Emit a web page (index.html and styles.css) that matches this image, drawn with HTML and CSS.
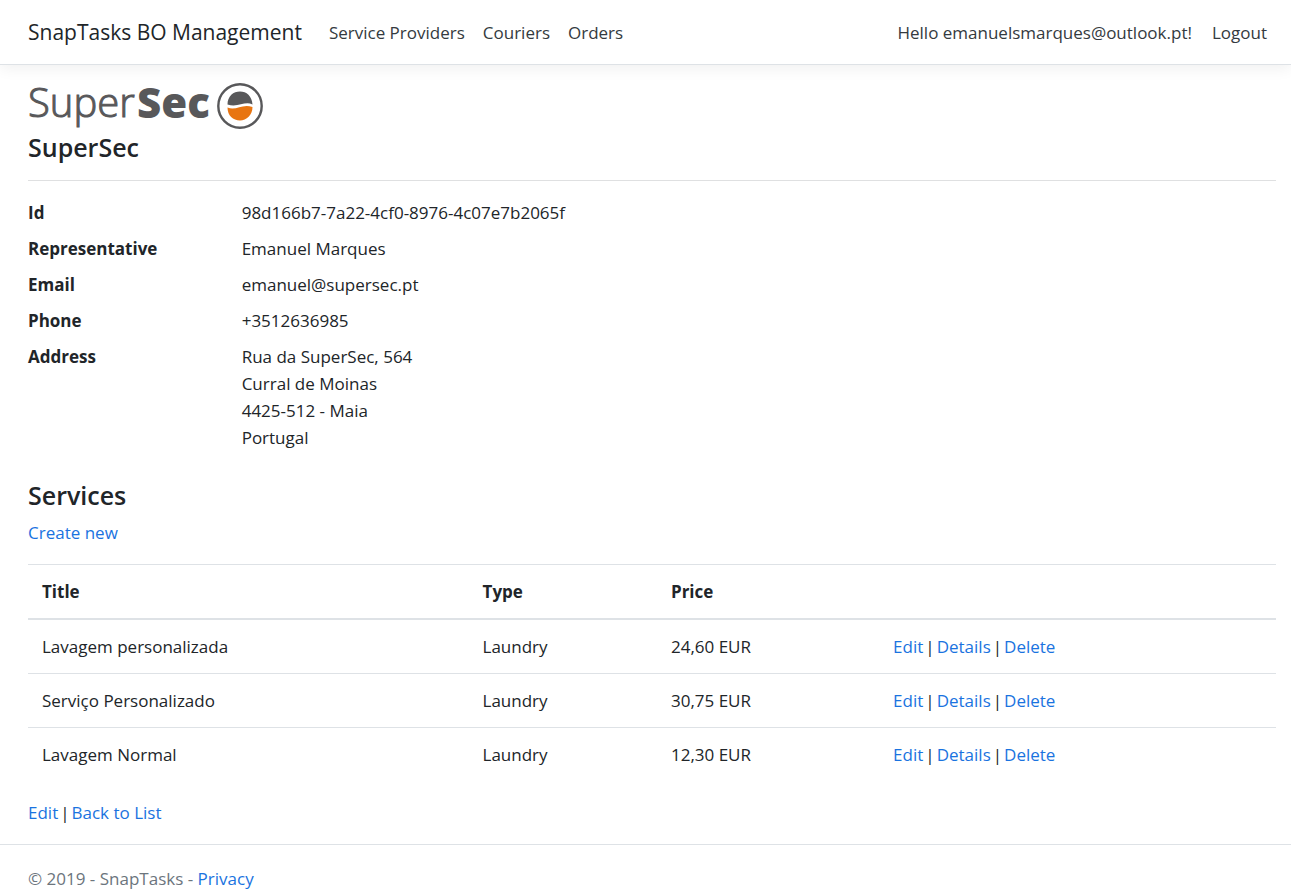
FILE: index.html
```html
<!DOCTYPE html>
<html lang="en">
<head>
  <meta charset="utf-8">
  <meta name="viewport" content="width=device-width, initial-scale=1">
  <title>SuperSec - SnapTasks BO Management</title>
  <link rel="stylesheet" href="styles.css">
</head>
<body>
  <header class="navbar">
    <a class="brand" href="#">SnapTasks BO Management</a>
    <nav class="nav-links">
      <a class="nav-link" href="#">Service Providers</a>
      <a class="nav-link" href="#">Couriers</a>
      <a class="nav-link" href="#">Orders</a>
    </nav>
    <div class="account">
      <a class="nav-link" href="#">Hello emanuelsmarques@outlook.pt!</a>
      <button class="nav-link logout" type="button">Logout</button>
    </div>
  </header>

  <main class="content">
    <svg class="logo" width="236" height="59" viewBox="0 -10 236 59" role="img" aria-label="SuperSec logo">
      <text class="logo-light" x="0" y="35">Super</text>
      <text class="logo-heavy" x="109" y="36">Sec</text>
      <circle cx="212" cy="24" r="21.700" fill="none" stroke="#58585a" stroke-width="2.4"/>
      <path d="M199.500 22.500C199.500 14 205.500 9.500 212 9.500C218.500 9.500 224 14 224.500 22.500C217 18.500 210 26 199.500 22.500Z" fill="#58585a"/>
      <path d="M199.500 25.500C208 29.500 214 21 224.500 25C224.500 33 218.500 38.500 212 38.500C205 38.500 199.500 33.500 199.500 25.500Z" fill="#e87511"/>
    </svg>
    <h1 class="title">SuperSec</h1>
    <hr class="rule">
    <dl class="details">
      <dt>Id</dt>
      <dd>98d166b7-7a22-4cf0-8976-4c07e7b2065f</dd>
      <dt>Representative</dt>
      <dd>Emanuel Marques</dd>
      <dt>Email</dt>
      <dd>emanuel@supersec.pt</dd>
      <dt>Phone</dt>
      <dd>+3512636985</dd>
      <dt>Address</dt>
      <dd>Rua da SuperSec, 564<br>Curral de Moinas<br>4425-512 - Maia<br>Portugal</dd>
    </dl>

    <h2 class="title">Services</h2>
    <div class="actions"><a href="#">Create new</a></div>
    <table class="table">
      <colgroup>
        <col class="col-title">
        <col class="col-type">
        <col class="col-price">
        <col>
      </colgroup>
      <thead>
        <tr><th scope="col">Title</th><th scope="col">Type</th><th scope="col">Price</th><th></th></tr>
      </thead>
      <tbody>
        <tr>
          <td>Lavagem personalizada</td><td>Laundry</td><td>24,60 EUR</td>
          <td><div class="actions"><a href="#">Edit</a> | <a href="#">Details</a> | <a href="#">Delete</a></div></td>
        </tr>
        <tr>
          <td>Serviço Personalizado</td><td>Laundry</td><td>30,75 EUR</td>
          <td><div class="actions"><a href="#">Edit</a> | <a href="#">Details</a> | <a href="#">Delete</a></div></td>
        </tr>
        <tr>
          <td>Lavagem Normal</td><td>Laundry</td><td>12,30 EUR</td>
          <td><div class="actions"><a href="#">Edit</a> | <a href="#">Details</a> | <a href="#">Delete</a></div></td>
        </tr>
      </tbody>
    </table>
    <div class="actions"><a href="#">Edit</a> | <a href="#">Back to List</a></div>
  </main>

  <footer class="footer">&copy; 2019 - SnapTasks - <a href="#">Privacy</a></footer>
</body>
</html>
```
FILE: styles.css
```css
* {
  box-sizing: border-box;
}

body {
  margin: 0;
  background: #fff;
  color: #212529;
  font-family: "Open Sans", "Noto Sans", sans-serif;
  font-size: 17px;
  line-height: 27px;
}

a {
  color: #1a73e0;
  text-decoration: none;
}

a:hover {
  text-decoration: underline;
}

.navbar {
  display: flex;
  align-items: center;
  padding: 14px 24px 14px 28px;
  border-bottom: 1px solid #dee2e6;
  box-shadow: 0 4px 14px rgba(0, 0, 0, 0.06);
}

.brand {
  margin-right: 27px;
  color: #212529;
  font-size: 21px;
  line-height: 36px;
}

.nav-links {
  display: flex;
  gap: 18px;
}

.account {
  display: flex;
  gap: 20px;
  margin-left: auto;
}

.nav-link {
  color: #343a40;
}

.logout {
  padding: 0;
  border: 0;
  background: none;
  font: inherit;
  cursor: pointer;
}

.content {
  padding: 7px 15px 18px 28px;
}

.logo {
  display: block;
  overflow: visible;
}

.logo text {
  fill: #58585a;
}

.logo-light {
  font-size: 40px;
  font-weight: 300;
  stroke: #58585a;
  stroke-width: 1px;
}

.logo-heavy {
  font-size: 42px;
  font-weight: 800;
}

.title {
  margin: 0;
  font-size: 25px;
  font-weight: 600;
  line-height: 33px;
}

.rule {
  height: 1px;
  margin: 16px 0 18px;
  border: 0;
  background: #dfe0e1;
}

.details {
  display: grid;
  grid-template-columns: 1fr 5fr;
  row-gap: 9px;
  margin: 0 -34px 28px 0;
}

.details dt {
  font-weight: 700;
}

.details dd {
  margin: 0;
}

.actions {
  display: flex;
  gap: 2px;
}

.title + .actions {
  margin-top: 7px;
}

.table {
  width: 100%;
  margin: 18px 0;
  border-collapse: collapse;
  table-layout: fixed;
}

.col-title {
  width: 35.3%;
}

.col-type {
  width: 15.1%;
}

.col-price {
  width: 17.8%;
}

.table th,
.table td {
  padding: 13px 14px;
  border-top: 1px solid #dee2e6;
  text-align: left;
}

.table thead th {
  border-bottom: 2px solid #dee2e6;
}

.footer {
  padding: 20px 28px 4px;
  border-top: 1px solid #dee2e6;
  color: #6c757d;
}
```
